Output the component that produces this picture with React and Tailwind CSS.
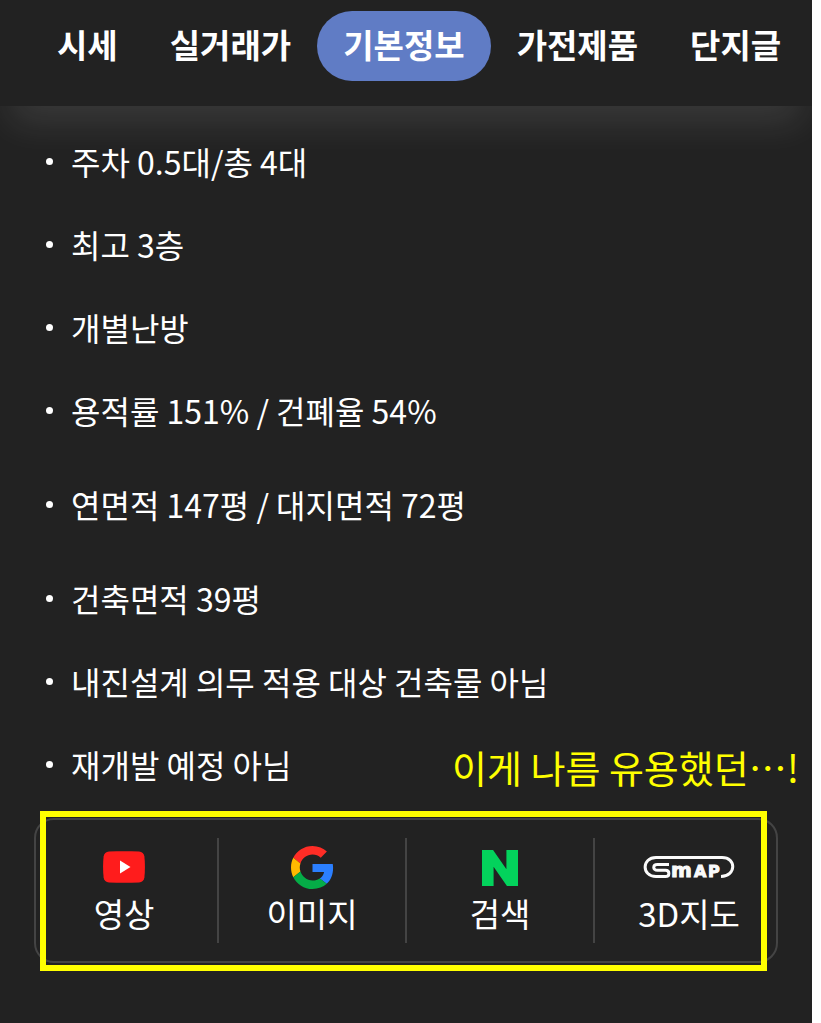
import React from 'react';
import { SiNaver } from 'react-icons/si';

const tabs = ['시세', '실거래가', '기본정보', '가전제품', '단지글'];

const details = [
  { text: '주차 0.5대/총 4대' },
  { text: '최고 3층' },
  { text: '개별난방' },
  { text: '용적률 151% / 건폐율 54%' },
  { text: '연면적 147평 / 대지면적 72평', spaced: true },
  { text: '건축면적 39평', spaced: true },
  { text: '내진설계 의무 적용 대상 건축물 아님' },
  { text: '재개발 예정 아님' },
];

function YoutubeLogo() {
  return (
    <svg width="42" height="32" viewBox="0 0 42 32" aria-hidden="true">
      <path
        fill="#ff1c1c"
        d="M6 .6C16 0 26 0 36 .6c3 .2 5 2 5.4 5 .7 7 .7 14 0 21-.4 3-2.4 4.600-5.400 4.800-10 .6-20 .6-30 0-3-.2-5-1.800-5.400-4.800-.7-7-.7-14 0-21C1 2.600 3 .8 6 .6z"
      />
      <path fill="#fff" d="M17 9.500v13L27.500 16z" />
    </svg>
  );
}

function GoogleLogo() {
  return (
    <svg width="43" height="43" viewBox="0 0 48 48" aria-hidden="true">
      <path fill="#ff2d26" d="M24 9.500c3.540 0 6.710 1.220 9.210 3.600l6.850-6.850C35.900 2.380 30.470 0 24 0 14.620 0 6.510 5.380 2.560 13.220l7.980 6.190C12.430 13.720 17.740 9.500 24 9.500z" />
      <path fill="#2b7fff" d="M46.980 24.550c0-1.570-.15-3.090-.38-4.550H24v9.020h12.940c-.58 2.960-2.260 5.480-4.780 7.180l7.730 6c4.510-4.180 7.090-10.360 7.090-17.650z" />
      <path fill="#ffb900" d="M10.530 28.590c-.48-1.450-.76-2.990-.76-4.590s.27-3.140.76-4.590l-7.980-6.190C.92 16.460 0 20.120 0 24c0 3.880.92 7.540 2.560 10.780l7.970-6.190z" />
      <path fill="#05ac47" d="M24 48c6.480 0 11.930-2.130 15.890-5.810l-7.730-6c-2.150 1.450-4.920 2.300-8.160 2.300-6.260 0-11.570-4.220-13.470-9.910l-7.980 6.190C6.510 42.620 14.620 48 24 48z" />
    </svg>
  );
}

function NaverLogo() {
  return <SiNaver className="mt-[2px] h-9 w-9 text-[#03d35c]" aria-hidden="true" />;
}

function SmapLogo() {
  return (
    <svg width="92" height="32" viewBox="0 -5 92 32" aria-hidden="true">
      <path
        fill="none"
        stroke="#fafafa"
        strokeWidth="3"
        d="M26 8.500H14.500c-5 0-5 5.800 0 5.800h8c4.500 0 4.500 6.200 0 6.200H13C-1.500 20.500-1.500 1.500 13 1.500h66c14.500 0 14.500 18.500-1 19"
      />
      <g
        fill="#fafafa"
        stroke="#fafafa"
        strokeWidth="1"
        fontFamily="'DejaVu Sans', sans-serif"
        fontWeight="700"
      >
        <text x="28" y="21" fontSize="20">m</text>
        <text x="51" y="21" fontSize="16">A</text>
        <text x="65" y="21" fontSize="16">P</text>
      </g>
    </svg>
  );
}

const links = [
  { label: '영상', Logo: YoutubeLogo },
  { label: '이미지', Logo: GoogleLogo },
  { label: '검색', Logo: NaverLogo },
  { label: '3D지도', Logo: SmapLogo },
];

function App() {
  return (
    <div className="mr-[9px] min-h-screen overflow-hidden bg-[#222222] font-['Noto_Sans_CJK_KR',sans-serif] text-white">
      <header className="relative z-10 bg-[#222222] pt-[11px] pb-[25px] pl-[31px] shadow-[0_28px_36px_-10px_rgba(255,255,255,0.1)]">
        <nav className="flex">
          {tabs.map((tab) => (
            <button
              key={tab}
              type="button"
              className={
                tab === '기본정보'
                  ? 'h-[70px] rounded-full bg-[#607cc5] px-[26px] pb-[2px] text-[33px] font-bold whitespace-nowrap'
                  : 'h-[70px] px-[26px] pb-[2px] text-[33px] font-bold whitespace-nowrap'
              }
            >
              {tab}
            </button>
          ))}
        </nav>
      </header>

      <main>
        <ul className="flex flex-col gap-[35px] px-[46px] pt-[31px] text-[32px] leading-[48px]">
          {details.map(({ text, spaced }) => (
            <li key={text} className={spaced ? 'mt-[11px] flex items-center gap-[18px]' : 'flex items-center gap-[18px]'}>
              <span className="h-[7px] w-[7px] shrink-0 rounded-full bg-white" />
              {text}
            </li>
          ))}
        </ul>

        <section className="relative mx-[34px] mt-[30px] rounded-[20px] border-2 border-[#444444] py-[18px]">
          <div className="-mr-[7px] -ml-[5px] grid grid-cols-4 divide-x-2 divide-[#444444]">
            {links.map(({ label, Logo }) => (
              <a key={label} href="#" className="flex flex-col items-center gap-[2px] pt-[7px] pb-2">
                <span className="flex h-11 items-center">
                  <Logo />
                </span>
                <span className="text-[33px] leading-[44px]">{label}</span>
              </a>
            ))}
          </div>

          {/* hand-made note and frame over the link card */}
          <div className="pointer-events-none absolute -top-[9px] right-[9px] -bottom-[10px] left-1 border-[6px] border-[#ffff00]" />
          <p className="absolute -top-[81px] -right-[23px] text-[38px] leading-[56px] whitespace-nowrap text-[#ffff00]">
            이게 나름 유용했던⋯!
          </p>
        </section>
      </main>
    </div>
  );
}

export default App;
